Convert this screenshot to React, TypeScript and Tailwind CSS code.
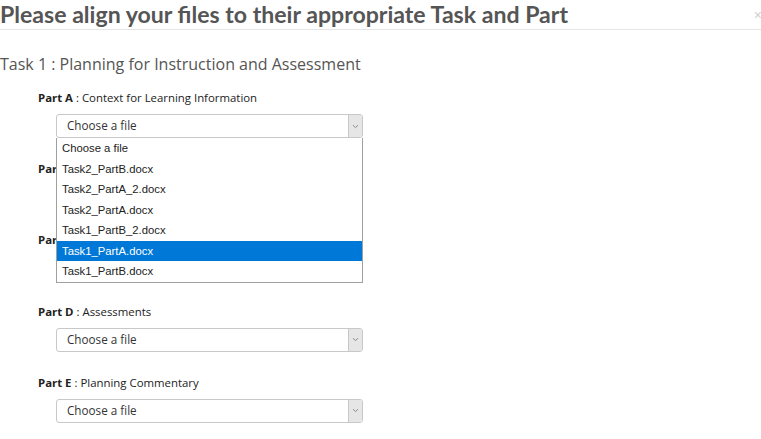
import React from "react";

const parts = [
  { id: "A", label: "Context for Learning Information" },
  { id: "B", label: "Instruction Plans" },
  { id: "C", label: "Instructional Materials" },
  { id: "D", label: "Assessments" },
  { id: "E", label: "Planning Commentary" },
];

const options = [
  "Choose a file",
  "Task2_PartB.docx",
  "Task2_PartA_2.docx",
  "Task2_PartA.docx",
  "Task1_PartB_2.docx",
  "Task1_PartA.docx",
  "Task1_PartB.docx",
];

function Select() {
  return (
    <div className="flex h-[24px] w-[307px] items-stretch rounded-[3px] border border-[#c8c8c8] bg-white">
      <div className="flex flex-1 items-center pl-[10px] text-[11.7px] text-[#333]" style={{ fontFamily: "'Open Sans', sans-serif" }}>
        Choose a file
      </div>
      <div className="flex w-[14px] items-center justify-center border-l border-[#c8c8c8] bg-[#e6e6e6] rounded-r-[2px]">
        <svg width="7" height="5" viewBox="0 0 7 5">
          <path d="M1 1.2 L3.5 3.6 L6 1.2" fill="none" stroke="#888" strokeWidth="1" />
        </svg>
      </div>
    </div>
  );
}

export default function App() {
  return (
    <div className="relative h-[439px] w-[761px] overflow-hidden bg-white" style={{ fontFamily: "'Open Sans', sans-serif" }}>
      <div className="flex items-start justify-between border-b border-[#e5e5e5] h-[30px]">
        <h1 className="mt-[0px] text-[23.1px] leading-[28px] font-bold text-[#555]" style={{ fontFamily: "Lato, sans-serif" }}>
          Please align your files to their appropriate Task and Part
        </h1>
        <span className="mt-[7px] mr-[-1px] text-[14px] leading-[16px] text-[#d0d0d0]" style={{ fontFamily: "Arial, 'Liberation Sans', sans-serif" }}>×</span>
      </div>
      <div className="mt-[23px] text-[16px] leading-[22px] text-[#555]">Task 1 : Planning for Instruction and Assessment</div>
      <div className="mt-[15px] pl-[38px] flex flex-col gap-[23.2px]">
        {parts.map((p) => (
          <div key={p.id} className="flex flex-col gap-[9px]">
            <div className="text-[11.4px] leading-[15px] text-[#222]">
              <span className="font-bold">Part {p.id}</span> : {p.label}
            </div>
            <div className="pl-[18px]">
              <Select />
            </div>
          </div>
        ))}
      </div>
      <div className="absolute left-[56px] top-[138px] w-[307px] border border-[#a0a0a0] border-t-0 bg-white" style={{ fontFamily: "Arial, 'Liberation Sans', sans-serif" }}>
        {options.map((o, i) => (
          <div
            key={o}
            className={`h-[20.5px] pl-[5px] text-[11.3px] leading-[21px] ${i === 5 ? "bg-[#0078d7] text-white" : "text-[#222]"}`}
          >
            {o}
          </div>
        ))}
      </div>
    </div>
  );
}
